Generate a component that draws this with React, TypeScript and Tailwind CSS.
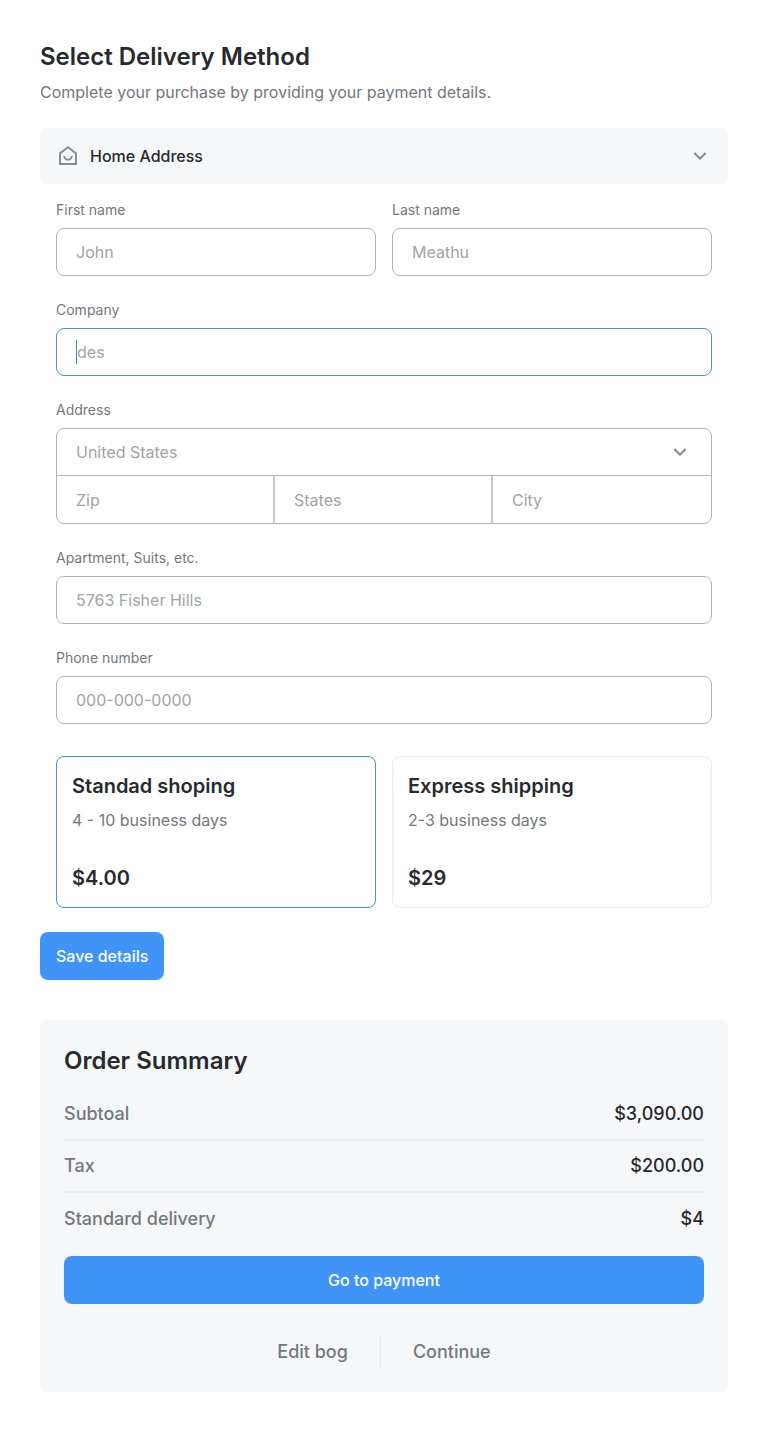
import { useId, useState } from "react";
import type { ReactNode } from "react";

function HomeSmileIcon() {
  return (
    <svg viewBox="0 0 24 24" className="size-6 shrink-0 text-[#868d94]" fill="none" stroke="currentColor" strokeWidth="2" aria-hidden="true">
      <path d="M4 9.4 12 3.3l8 6.1V20H4z" />
      <path d="M8.2 11.9a3.8 3.8 0 0 0 7.6 0" />
    </svg>
  );
}

function ChevronDown({ className = "" }: { className?: string }) {
  return (
    <svg viewBox="0 0 24 24" className={`size-6 text-[#84888d] ${className}`} fill="currentColor" aria-hidden="true">
      <path d="M12 13.172l4.95-4.95 1.414 1.414L12 16 5.636 9.636 7.05 8.222z" />
    </svg>
  );
}

const inputClass =
  "h-12 w-full rounded-lg border border-[#b1b3b6] bg-white px-[19px] text-base text-[#2a2d31] placeholder:text-[#a0a3a7] outline-none";

const cellClass =
  "h-[47px] w-full min-w-0 px-[19px] text-base text-[#2a2d31] placeholder:text-[#a0a3a7] outline-none";

function Label({ htmlFor, children }: { htmlFor: string; children: ReactNode }) {
  return (
    <label htmlFor={htmlFor} className="block text-sm text-[#74777d]">
      {children}
    </label>
  );
}

function Field({ label, placeholder, type = "text" }: { label: string; placeholder: string; type?: string }) {
  const id = useId();
  return (
    <div className="flex flex-col gap-2">
      <Label htmlFor={id}>{label}</Label>
      <input id={id} type={type} placeholder={placeholder} className={inputClass} />
    </div>
  );
}

function CompanyField() {
  const id = useId();
  return (
    <div className="flex flex-col gap-2">
      <Label htmlFor={id}>Company</Label>
      <div className="relative">
        <input
          id={id}
          type="text"
          placeholder="des"
          className="h-12 w-full rounded-lg border border-[#4a8fdc] bg-white px-5 text-base text-[#2a2d31] placeholder:text-[#a0a3a7] outline-none"
        />
        <span className="pointer-events-none absolute top-3 left-5 h-6 w-px bg-[#3f87d9]" />
      </div>
    </div>
  );
}

function AddressField() {
  const id = useId();
  return (
    <div className="flex flex-col gap-2">
      <Label htmlFor={id}>Address</Label>
      <div className="rounded-lg border border-[#b1b3b6] bg-white">
        <div className="relative">
          <select
            id={id}
            defaultValue="us"
            className="block h-[46px] w-full appearance-none rounded-t-lg bg-transparent px-[19px] text-base text-[#a0a3a7] outline-none"
          >
            <option value="us">United States</option>
          </select>
          <ChevronDown className="pointer-events-none absolute top-[11px] right-[19px]" />
        </div>
        <div className="grid grid-cols-3 divide-x-2 divide-[#c6c8ca] border-t border-[#b1b3b6]">
          <input aria-label="Zip" placeholder="Zip" className={cellClass} />
          <input aria-label="States" placeholder="States" className={cellClass} />
          <input aria-label="City" placeholder="City" className={cellClass} />
        </div>
      </div>
    </div>
  );
}

const shippingOptions = [
  { id: "standard", title: "Standad shoping", time: "4 - 10 business days", price: "$4.00" },
  { id: "express", title: "Express shipping", time: "2-3 business days", price: "$29" },
];

function ShippingOptions() {
  const [selected, setSelected] = useState("standard");
  return (
    <div className="mt-8 grid grid-cols-2 gap-4">
      {shippingOptions.map((o) => (
        <label
          key={o.id}
          className="relative flex cursor-pointer flex-col rounded-lg border border-[#e9eaec] p-[15px] has-checked:border-[#4a8fdc]"
        >
          <input
            type="radio"
            name="shipping"
            value={o.id}
            checked={selected === o.id}
            onChange={() => setSelected(o.id)}
            className="sr-only"
          />
          <span className="text-xl leading-7 font-semibold text-[#272a2e]">{o.title}</span>
          <span className="mt-2 text-base text-[#74777d]">{o.time}</span>
          <span className="mt-8 text-xl leading-7 font-semibold text-[#272a2e]">{o.price}</span>
        </label>
      ))}
    </div>
  );
}

const summaryRows = [
  { label: "Subtoal", value: "$3,090.00" },
  { label: "Tax", value: "$200.00" },
  { label: "Standard delivery", value: "$4" },
];

function OrderSummary() {
  return (
    <section className="mt-10 rounded-lg bg-[#f6f7f9] p-6">
      <h2 className="text-2xl leading-[34px] font-semibold text-[#272a2e]">Order Summary</h2>
      <dl className="my-[11px]">
        {summaryRows.map((r) => (
          <div
            key={r.label}
            className="flex h-[52px] items-center justify-between border-b-2 border-[#ecedef] text-lg font-medium last:border-b-0"
          >
            <dt className="text-[#74777d]">{r.label}</dt>
            <dd className="text-[#272a2e]">{r.value}</dd>
          </div>
        ))}
      </dl>
      <button type="button" className="h-12 w-full rounded-lg bg-[#4094f7] text-base font-medium text-white">
        Go to payment
      </button>
      <div className="mt-8 flex h-8 items-center justify-center gap-8 text-lg font-medium text-[#74777d]">
        <a href="#bag">Edit bog</a>
        <span className="h-8 w-px bg-[#e9eaec]" />
        <a href="#continue">Continue</a>
      </div>
    </section>
  );
}

export default function App() {
  return (
    <main className="min-h-screen bg-white p-10 font-['Inter',sans-serif]">
      <h1 className="text-2xl leading-[34px] font-semibold text-[#272a2e]">Select Delivery Method</h1>
      <p className="mt-1.5 text-base text-[#74777d]">Complete your purchase by providing your payment details.</p>

      <form onSubmit={(e) => e.preventDefault()}>
        <button
          type="button"
          aria-expanded="true"
          className="mt-6 flex h-14 w-full items-center gap-2.5 rounded-lg bg-[#f6f7f9] px-4 text-base font-medium text-[#272a2e]"
        >
          <HomeSmileIcon />
          <span>Home Address</span>
          <ChevronDown className="ml-auto" />
        </button>

        <div className="px-4 pt-4">
          <div className="flex flex-col gap-6">
            <div className="grid grid-cols-2 gap-4">
              <Field label="First name" placeholder="John" />
              <Field label="Last name" placeholder="Meathu" />
            </div>
            <CompanyField />
            <AddressField />
            <Field label="Apartment, Suits, etc." placeholder="5763 Fisher Hills" />
            <Field label="Phone number" placeholder="000-000-0000" type="tel" />
          </div>
          <ShippingOptions />
        </div>

        <button type="submit" className="mt-6 h-12 rounded-lg bg-[#4094f7] px-4 text-base font-medium text-white">
          Save details
        </button>
      </form>

      <OrderSummary />
    </main>
  );
}
